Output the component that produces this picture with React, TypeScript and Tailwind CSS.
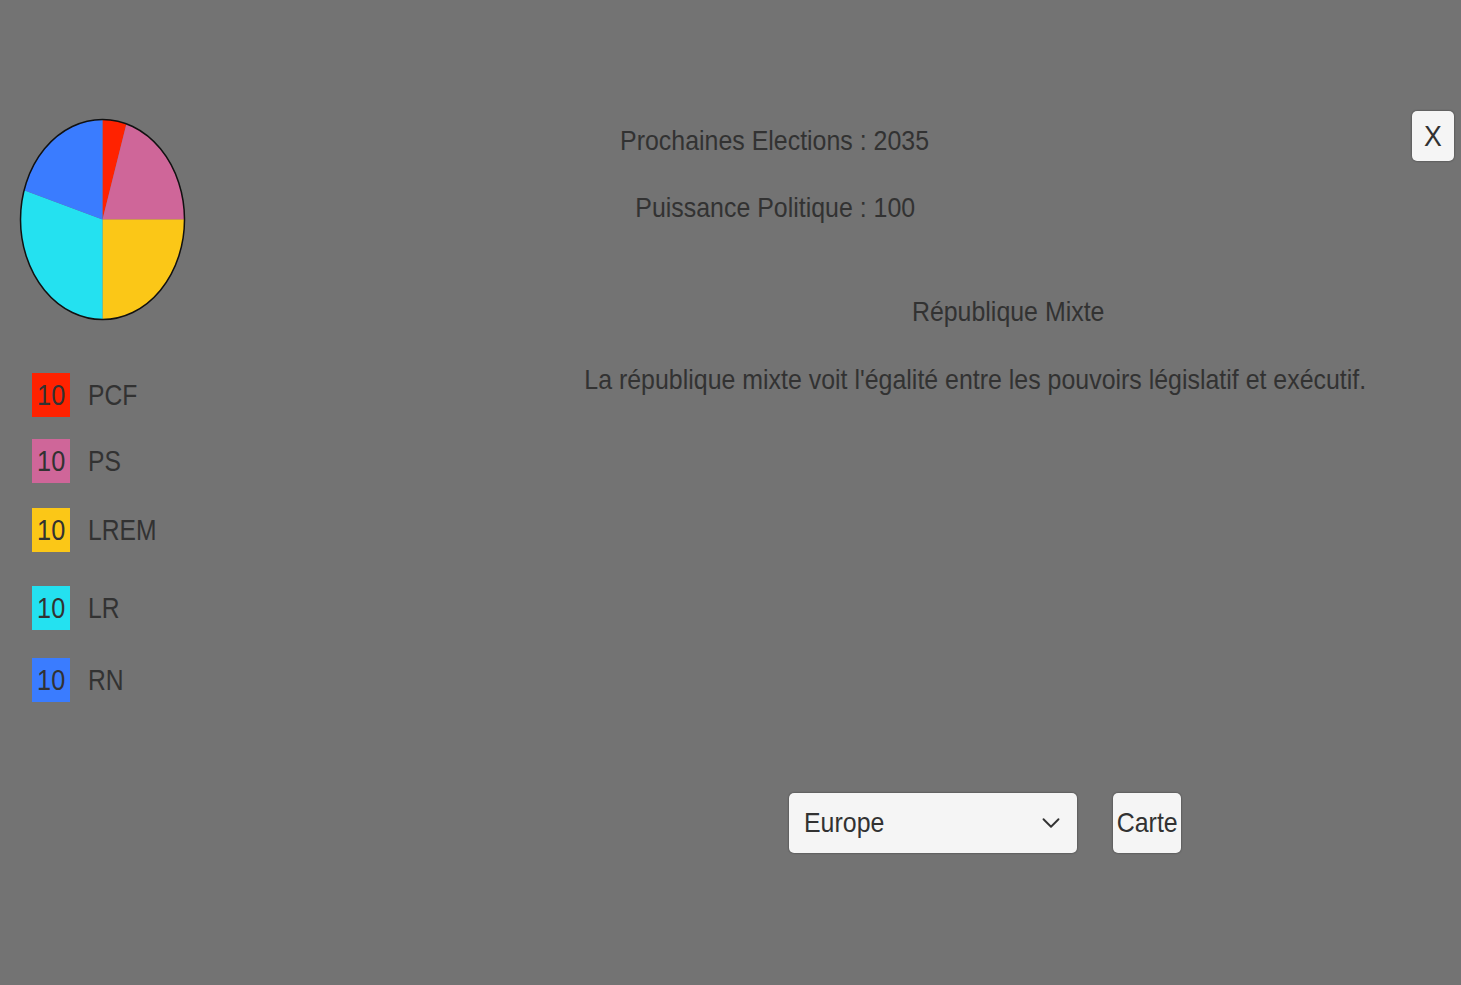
import ChevronDown from 'lucide-react/dist/esm/icons/chevron-down';

const cx = 83.5;
const cy = 101.5;
const rx = 82;
const ry = 100;

// parts du camembert, en degrés depuis midi (sens horaire)
const SLICES = [
  { color: '#ff2200', from: 0, to: 17 },
  { color: '#cf6699', from: 17, to: 90 },
  { color: '#fbc717', from: 90, to: 180 },
  { color: '#24e1f0', from: 180, to: 287 },
  { color: '#3a7cff', from: 287, to: 360 },
];

const PARTIES = [
  { name: 'PCF', value: 10, swatch: 'bg-[#ff2200]', gap: 'mt-[52px]' },
  { name: 'PS', value: 10, swatch: 'bg-[#cf6699]', gap: 'mt-[22px]' },
  { name: 'LREM', value: 10, swatch: 'bg-[#fbc717]', gap: 'mt-[25px]' },
  { name: 'LR', value: 10, swatch: 'bg-[#24e1f0]', gap: 'mt-[34px]' },
  { name: 'RN', value: 10, swatch: 'bg-[#3a7cff]', gap: 'mt-[28px]' },
];

function point(deg: number) {
  const a = (deg * Math.PI) / 180;
  return `${(cx + rx * Math.sin(a)).toFixed(2)} ${(cy - ry * Math.cos(a)).toFixed(2)}`;
}

function PieChart() {
  return (
    <svg width="167" height="203" viewBox="0 0 167 203" className="ml-[19px] block">
      {SLICES.map((s) => (
        <path
          key={s.color}
          d={`M ${cx} ${cy} L ${point(s.from)} A ${rx} ${ry} 0 0 1 ${point(s.to)} Z`}
          fill={s.color}
        />
      ))}
      <ellipse cx={cx} cy={cy} rx={rx} ry={ry} fill="none" stroke="#111" strokeWidth="1.5" />
    </svg>
  );
}

export default function App() {
  return (
    <div className="flex h-[985px] w-full overflow-hidden bg-[#737373] font-['Liberation_Sans',Arial,sans-serif] text-[#323232]">
      {/* Colonne gauche : camembert + légende */}
      <div className="flex w-[200px] shrink-0 flex-col pt-[118px]">
        <PieChart />
        <ul className="pl-[32px]">
          {PARTIES.map((p) => (
            <li key={p.name} className={`flex items-center ${p.gap}`}>
              <div className={`flex h-[44px] w-[38px] items-center justify-center ${p.swatch}`}>
                <span className="inline-block scale-x-[0.87] text-[29px] leading-none">{p.value}</span>
              </div>
              <span className="ml-[18px] inline-block origin-left scale-x-[0.85] text-[29px] leading-none">
                {p.name}
              </span>
            </li>
          ))}
        </ul>
      </div>

      {/* Zone principale */}
      <div className="flex min-w-0 flex-1 flex-col pb-[132px]">
        <div className="flex">
          <div className="min-w-0 flex-1 pt-[127px]">
            <div className="w-[1150px] text-center text-[28px] leading-none">
              <span className="inline-block scale-x-[0.89]">Prochaines Elections : 2035</span>
            </div>
            <div className="mt-[39px] w-[1150px] text-center text-[28px] leading-none">
              <span className="inline-block scale-x-[0.89]">Puissance Politique : 100</span>
            </div>
            <div className="ml-[608px] mt-[76px] w-[400px] text-center text-[28px] leading-none">
              <span className="inline-block scale-x-[0.89]">République Mixte</span>
            </div>
            <div className="ml-[275px] mt-[40px] w-[1000px] whitespace-nowrap text-center text-[28px] leading-none">
              <span className="inline-block scale-x-[0.89]">
                La république mixte voit l'égalité entre les pouvoirs législatif et exécutif.
              </span>
            </div>
          </div>
          <button className="mr-[7px] mt-[111px] flex h-[50px] w-[42px] shrink-0 items-center justify-center rounded-[5px] bg-[#f5f5f5] text-[30px] leading-none shadow-[0_0_2px_rgba(0,0,0,0.55)]">
            <span className="inline-block scale-x-[0.89]">X</span>
          </button>
        </div>

        <div className="ml-[589px] mt-auto flex gap-[36px]">
          <div className="flex h-[60px] w-[288px] items-center justify-between rounded-[5px] bg-[#f5f5f5] pl-[15px] pr-[11px] shadow-[0_0_2px_rgba(0,0,0,0.55)]">
            <span className="inline-block origin-left scale-x-[0.89] text-[28px] leading-none">Europe</span>
            <ChevronDown className="h-[30px] w-[30px]" strokeWidth={1.5} />
          </div>
          <button className="flex h-[60px] w-[68px] items-center justify-center rounded-[5px] bg-[#f5f5f5] shadow-[0_0_2px_rgba(0,0,0,0.55)]">
            <span className="inline-block scale-x-[0.89] text-[28px] leading-none">Carte</span>
          </button>
        </div>
      </div>
    </div>
  );
}
